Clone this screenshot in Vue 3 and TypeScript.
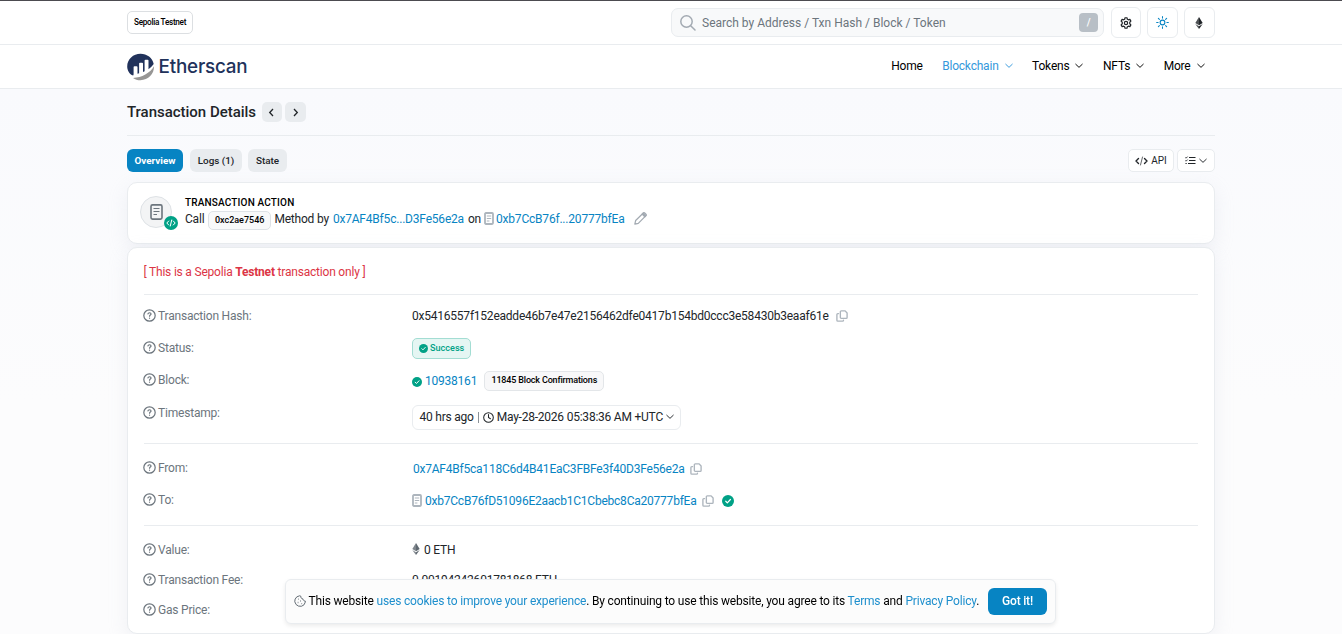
<script setup lang="ts">
import { h, type FunctionalComponent } from 'vue'

interface NavItem {
  label: string
  active?: boolean
  menu?: boolean
}

const navItems: NavItem[] = [
  { label: 'Home' },
  { label: 'Blockchain', active: true, menu: true },
  { label: 'Tokens', menu: true },
  { label: 'NFTs', menu: true },
  { label: 'More', menu: true },
]

const stroke = (size: number, width: number, d: string[], viewBox = '0 0 16 16') =>
  h(
    'svg',
    {
      width: size,
      height: size,
      viewBox,
      fill: 'none',
      stroke: 'currentColor',
      'stroke-width': width,
      'stroke-linecap': 'round',
      'stroke-linejoin': 'round',
    },
    d.map((path) => h('path', { d: path })),
  )

const Chevron: FunctionalComponent = () => stroke(8, 1.9, ['M1.5 4.5l6.5 6.2L14.5 4.5'])
const Help: FunctionalComponent = () =>
  stroke(13, 1.5, [
    'M8 1a7 7 0 1 1 0 14A7 7 0 0 1 8 1z',
    'M6.1 6.1c.2-1 .9-1.5 1.9-1.5 1.1 0 1.9.7 1.9 1.6 0 1.2-1.8 1.3-1.8 2.6',
    'M8.05 11.2v.1',
  ])
const Copy: FunctionalComponent = () =>
  stroke(12, 1.8, [
    'M7 1.2h5.2L14.8 4v6a1.2 1.2 0 0 1-1.2 1.2H7A1.2 1.2 0 0 1 5.8 10V2.4A1.2 1.2 0 0 1 7 1.2z',
    'M3.4 4.8H2.4A1.2 1.2 0 0 0 1.2 6v7.6A1.2 1.2 0 0 0 2.4 14.8H8.8A1.2 1.2 0 0 0 10 13.6',
  ])
const Contract: FunctionalComponent = () =>
  h('svg', { width: 10, height: 13, viewBox: '0 0 10 13', fill: 'none', stroke: 'currentColor' }, [
    h('rect', { x: 1, y: 1, width: 8, height: 11, rx: 0.9, 'stroke-width': 1.8 }),
    h('path', { d: 'M2.8 4h4.4M2.8 6.5h4.4M2.8 9h2.6', 'stroke-width': 1.1 }),
  ])
const Check: FunctionalComponent = () =>
  h('svg', { width: 10, height: 10, viewBox: '0 0 16 16' }, [
    h('circle', { cx: 8, cy: 8, r: 8, fill: '#00a186' }),
    h('path', {
      d: 'M5 8.3l2.1 2.1L11.2 6',
      fill: 'none',
      stroke: '#fff',
      'stroke-width': 1.6,
      'stroke-linecap': 'round',
      'stroke-linejoin': 'round',
    }),
  ])
const Ether: FunctionalComponent = () =>
  h('svg', { width: 8, height: 12, viewBox: '0 0 8 12' }, [
    h('path', { d: 'M4 0L0.3 6.1 4 8.3z', fill: 'currentColor', opacity: 0.8 }),
    h('path', { d: 'M4 0L7.7 6.1 4 8.3z', fill: 'currentColor' }),
    h('path', { d: 'M.3 7L4 9.2V12z', fill: 'currentColor', opacity: 0.8 }),
    h('path', { d: 'M7.7 7L4 9.2V12z', fill: 'currentColor' }),
  ])
</script>

<template>
  <div class="page">
    <header class="topbar">
      <div class="wrap bar-row">
        <span class="network">Sepolia Testnet</span>
        <div class="tools">
          <div class="search">
            <svg width="16" height="16" viewBox="0 0 16 16" fill="none" stroke="#a3aab2" stroke-width="1.5" stroke-linecap="round">
              <circle cx="6.5" cy="6.5" r="5.7" />
              <path d="M10.7 10.7L15 15" />
            </svg>
            <span class="placeholder">Search by Address / Txn Hash / Block / Token</span>
            <kbd>/</kbd>
          </div>
          <button class="tool" aria-label="Settings">
            <svg width="12" height="12" viewBox="0 0 16 16" fill="none" stroke="#212529" stroke-width="1.6" stroke-linejoin="round">
              <path d="M6.700 1h2.600l.5 2 1.400.8 2-.6 1.300 2.300L13 7v2l1.500 1.500-1.300 2.300-2-.6-1.400.8-.5 2H6.700l-.5-2-1.400-.8-2 .6-1.300-2.300L3 9V7L1.500 5.500l1.300-2.300 2 .6L6.200 3z" />
              <circle cx="8" cy="8" r="2.200" />
            </svg>
          </button>
          <button class="tool" aria-label="Theme">
            <svg width="13" height="13" viewBox="0 0 16 16" fill="none" stroke="#0784c3" stroke-width="1.3" stroke-linecap="round">
              <circle cx="8" cy="8" r="2.900" />
              <path d="M8 .8v1.800M8 13.400v1.800M.8 8h1.800M13.400 8h1.800M2.900 2.900l1.300 1.300M11.800 11.800l1.300 1.300M2.900 13.100l1.300-1.300M11.800 4.200l1.300-1.300" />
            </svg>
          </button>
          <button class="tool eth-tool" aria-label="Network"><Ether /></button>
        </div>
      </div>
    </header>

    <nav class="navbar">
      <div class="wrap bar-row">
        <svg class="logo" width="122" height="28" viewBox="0 0 122 28">
          <path d="M6.100 22.500C2.500 21.500.2 17.300.2 13.500.2 6.300 6.200.8 13.500.8c6.500 0 12 4.200 13.200 10.200-1.200 1.800-3.200 3.800-5.200 5.200V7.600c0-.6-.3-.9-.9-.9h-2.100c-.6 0-.9.3-.9.9v10.600l-1.600.8v-8.400c0-.6-.3-.9-.9-.9H13c-.6 0-.9.3-.9.9v9.700l-1.600.4v-6.500c0-.6-.3-.9-.9-.9H7.500c-.6 0-.9.3-.9.9v6.500c0 1-.2 1.500-.5 1.800z" fill="#21325b" />
          <path d="M27 13.300c.3 7.600-5.800 13.900-13.500 13.900-2.900 0-5.300-.9-7.500-2.300 8.800-.2 17-4.800 21-11.600z" fill="#979695" />
          <text x="31.500" y="20" textLength="89" lengthAdjust="spacingAndGlyphs">Etherscan</text>
        </svg>
        <ul class="menu">
          <li v-for="item in navItems" :key="item.label" :class="{ active: item.active }">
            <span>{{ item.label }}</span>
            <Chevron v-if="item.menu" />
          </li>
        </ul>
      </div>
    </nav>

    <main class="wrap">
      <div class="heading">
        <h1>Transaction Details</h1>
        <button class="step" aria-label="Previous">
          <svg width="7" height="9" viewBox="0 0 7 9"><path d="M5 1L1.700 4.500 5 8" /></svg>
        </button>
        <button class="step" aria-label="Next">
          <svg width="7" height="9" viewBox="0 0 7 9"><path d="M2 1l3.300 3.500L2 8" /></svg>
        </button>
      </div>

      <div class="tabs">
        <button class="tab current">Overview</button>
        <button class="tab">Logs (1)</button>
        <button class="tab">State</button>
        <div class="actions">
          <button class="small">
            <svg width="13" height="10" viewBox="0 0 13 10" fill="none" stroke="currentColor" stroke-width="1.4" stroke-linecap="round" stroke-linejoin="round">
              <path d="M3.500 2.500L1 5l2.500 2.500M9.500 2.500L12 5 9.500 7.500" />
              <path d="M7.500 1l-2 8" stroke-width=".7" />
            </svg>
            <span>API</span>
          </button>
          <button class="small list" aria-label="View options">
            <svg width="11" height="9" viewBox="0 0 11 9" fill="none" stroke="currentColor" stroke-width="1.1">
              <path d="M4 1.500h6.500M4 4.500h6.500M3 7.500h7.500M.5 7.500h1.200" />
              <path d="M.4 1.500l.7.700L2.600.6M.4 4.500l.7.700 1.500-1.600" stroke-width=".9" />
            </svg>
            <Chevron />
          </button>
        </div>
      </div>

      <section class="card action">
        <div class="avatar">
          <svg width="13" height="16" viewBox="0 0 13 16" fill="none" stroke="#6c757d">
            <rect x="1" y=".9" width="11" height="14.200" rx="1.500" stroke-width="1.600" />
            <path d="M3.500 4.500h6M3.500 7.500h6M3.500 10.500h3.500" stroke-width="1.200" />
          </svg>
          <span class="code-badge">
            <svg width="10" height="8" viewBox="0 0 10 8" fill="none" stroke="#fff" stroke-width="1" stroke-linecap="round" stroke-linejoin="round">
              <path d="M2.700 2L.8 4l1.900 2M7.300 2l1.900 2-1.900 2M5.700 1L4.300 7" />
            </svg>
          </span>
        </div>
        <div>
          <h2>TRANSACTION ACTION</h2>
          <div class="sentence">
            <span>Call</span>
            <span class="method">0xc2ae7546</span>
            <span>Method by</span>
            <a class="by">0x7AF4Bf5c...D3Fe56e2a</a>
            <span class="on">on</span>
            <Contract class="muted" />
            <a>0xb7CcB76f...20777bfEa</a>
            <svg class="pencil" width="13" height="13" viewBox="0 0 16 16" fill="none" stroke="#a3aab2" stroke-width="1.5" stroke-linejoin="round">
              <path d="M1 15l1-4.500L11.500 1.200c.5-.5 1.200-.5 1.700 0l1.500 1.500c.5.5.5 1.200 0 1.700L5.300 14z" />
              <path d="M10 2.700L13.300 6l1.500-1.500L11.500 1.200z" fill="#a3aab2" />
            </svg>
          </div>
        </div>
      </section>

      <section class="card details">
        <p class="notice">[ This is a Sepolia <b>Testnet</b> transaction only ]</p>

        <dl class="group first">
          <div class="row">
            <dt><Help />Transaction Hash:</dt>
            <dd>0x5416557f152eadde46b7e47e2156462dfe0417b154bd0ccc3e58430b3eaaf61e<Copy class="copy hash-copy" /></dd>
          </div>
          <div class="row">
            <dt><Help />Status:</dt>
            <dd><span class="success"><Check class="mini" />Success</span></dd>
          </div>
          <div class="row">
            <dt><Help />Block:</dt>
            <dd class="block"><Check class="tick" /><a>10938161</a><span class="confirmations">11845 Block Confirmations</span></dd>
          </div>
          <div class="row stamp">
            <dt><Help />Timestamp:</dt>
            <dd>
              <span class="time">
                <span>40 hrs ago</span><i></i>
                <svg width="11" height="11" viewBox="0 0 16 16" fill="none" stroke="currentColor" stroke-width="1.5" stroke-linecap="round">
                  <circle cx="8" cy="8" r="7" />
                  <path d="M8 3.800V8l2.800 1.800" />
                </svg>
                <span class="date">May-28-2026 05:38:36 AM +UTC</span>
                <Chevron />
              </span>
            </dd>
          </div>
        </dl>

        <dl class="group second">
          <div class="row">
            <dt><Help />From:</dt>
            <dd class="from"><a>0x7AF4Bf5ca118C6d4B41EaC3FBFe3f40D3Fe56e2a</a><Copy class="copy" /></dd>
          </div>
          <div class="row">
            <dt><Help />To:</dt>
            <dd class="to"><Contract class="muted" /><a>0xb7CcB76fD51096E2aacb1C1Cbebc8Ca20777bfEa</a><Copy class="copy" /><Check class="verified" /></dd>
          </div>
        </dl>

        <dl class="group third">
          <div class="row">
            <dt><Help />Value:</dt>
            <dd class="value"><Ether />0 ETH</dd>
          </div>
          <div class="row">
            <dt><Help />Transaction Fee:</dt>
            <dd>0.00194242601781868 ETH</dd>
          </div>
          <div class="row">
            <dt><Help />Gas Price:</dt>
            <dd></dd>
          </div>
        </dl>
      </section>
    </main>

    <aside class="cookies">
      <svg width="12" height="12" viewBox="0 0 16 16" fill="none" stroke="#5f6870" stroke-width="1.3" stroke-linejoin="round">
        <path d="M7.500 1L3.700 2.500 1.500 5.500 1 9l1.800 3.700L6 14.800l4 .2 3.400-2L15 9.500V8c-1.800 0-3-1.200-3-2.800C10.200 5.200 9 4 9 1.500z" />
        <path d="M5.500 5.500h.8M5 10h.8M8.500 8h.8M10 11.500h.8" stroke-width="1.700" />
      </svg>
      <p>This website <a>uses cookies to improve your experience</a>. By continuing to use this website, you agree to its <a>Terms</a> and <a>Privacy Policy</a>.</p>
      <button>Got it!</button>
    </aside>
  </div>
</template>

<style>
html,
body {
  overflow: hidden;
}
</style>

<style scoped>
* {
  box-sizing: border-box;
}
.page {
  height: 634px;
  overflow: hidden;
  border-top: 1px solid #4c4b50;
  background: linear-gradient(#f9fafd 88px, #fcfcfd 400px);
  color: #212529;
  font: 12px/16px Roboto, sans-serif;
  letter-spacing: -0.2px;
}
svg {
  display: block;
  flex: none;
}
button {
  padding: 0;
  font-family: inherit;
  color: inherit;
  letter-spacing: 0;
}
a {
  color: #0784c3;
}
.wrap {
  width: 1088px;
  margin: 0 auto;
}
.bar-row {
  display: flex;
  align-items: center;
  justify-content: space-between;
  height: 43px;
}
.topbar,
.navbar {
  background: #fff;
  border-bottom: 1px solid #e9ecef;
}
.network {
  height: 23px;
  padding: 0 6px;
  border: 1px solid #dcdfe2;
  border-radius: 5px;
  font-size: 8.2px;
  font-weight: 500;
  letter-spacing: -0.3px;
  line-height: 21px;
  color: #000;
}
.tools {
  display: flex;
  align-items: center;
}
.search {
  display: flex;
  align-items: center;
  width: 433px;
  height: 29px;
  margin-right: 7px;
  padding: 0 5px 0 8px;
  border: 1px solid #e9ecef;
  border-radius: 7px;
  background: #f8f9fa;
}
.placeholder {
  margin-left: 6px;
  letter-spacing: 0;
  color: #6c757d;
}
kbd {
  width: 19px;
  height: 19px;
  margin-left: auto;
  border-radius: 4px;
  background: #b8bfc6;
  color: #fff;
  font: 500 10px/19px Roboto, sans-serif;
  text-align: center;
}
.tool {
  display: flex;
  align-items: center;
  justify-content: center;
  width: 30px;
  height: 31px;
  margin-right: 6px;
  border: 1px solid #e9ecef;
  border-radius: 6px;
  background: #fff;
}
.tool + .tool {
  width: 31px;
}
.tool.eth-tool {
  margin-right: 0;
  padding-right: 1px;
}
.logo text {
  font: 500 19px Inter, sans-serif;
  fill: #21325b;
}
.menu {
  display: flex;
  gap: 19.5px;
  margin: 0;
  padding: 0 10.5px 2px 0;
  list-style: none;
  letter-spacing: -0.2px;
  color: #000;
}
.menu li {
  display: flex;
  align-items: center;
  gap: 6px;
}
.menu .active {
  color: #3498db;
}
.heading {
  display: flex;
  align-items: center;
  gap: 3px;
  height: 47px;
  border-bottom: 1px solid #e9ecef;
}
h1 {
  margin: 0 2.5px 0 0;
  padding-bottom: 1px;
  font-size: 15px;
  font-weight: 500;
  letter-spacing: -0.02px;
}
.step {
  display: flex;
  align-items: center;
  justify-content: center;
  width: 20.5px;
  height: 20px;
  border: 0;
  border-radius: 5px;
  background: #e9ecef;
}
.step path {
  fill: none;
  stroke: #212529;
  stroke-width: 1.3;
}
.tabs {
  display: flex;
  gap: 7px;
  margin-top: 13px;
}
.tab {
  width: 39px;
  height: 23px;
  border: 0;
  border-radius: 6px;
  background: #e9ecef;
  font-size: 9.9px;
  font-weight: 500;
  color: #212529;
}
.tab:nth-child(2) {
  width: 52px;
}
.tab:nth-child(3) {
  margin-left: -1px;
}
.tab.current {
  width: 56px;
  background: #0784c3;
  color: #fff;
  font-weight: 700;
}
.actions {
  display: flex;
  gap: 3px;
  margin-left: auto;
}
.small {
  display: flex;
  align-items: center;
  justify-content: center;
  gap: 3px;
  width: 46px;
  height: 23px;
  border: 1px solid #e9ecef;
  border-radius: 5px;
  background: #fff;
  font-size: 10px;
}
.small.list {
  width: 38px;
}
.card {
  border: 1px solid #e9ecef;
  border-radius: 10px;
  background: #fff;
  box-shadow: 0 6px 19px rgba(189, 197, 209, 0.2);
}
.action {
  display: flex;
  height: 62px;
  margin-top: 10px;
  padding: 13px 12px;
}
.avatar {
  position: relative;
  display: flex;
  align-items: center;
  justify-content: center;
  width: 32px;
  height: 32px;
  margin-right: 13px;
  border: 1px solid #dee2e6;
  border-radius: 50%;
  background: #f3f4f5;
}
.code-badge {
  position: absolute;
  right: -7px;
  bottom: -3px;
  display: flex;
  align-items: center;
  justify-content: center;
  width: 14px;
  height: 14px;
  border-radius: 50%;
  background: #00a186;
}
h2 {
  margin: 0;
  font-size: 10px;
  font-weight: 500;
  line-height: 13px;
  letter-spacing: 0.17px;
  color: #000;
}
.sentence {
  display: flex;
  align-items: center;
  height: 19px;
}
.method {
  height: 19px;
  margin: 3px 3px 0 3.5px;
  padding: 0 6px;
  border: 1px solid #dee2e6;
  border-radius: 5px;
  background: #f8f9fa;
  font-size: 9px;
  font-weight: 500;
  letter-spacing: 0;
  line-height: 17px;
  color: #000;
}
.by {
  margin-left: 4px;
}
.on {
  margin: 0 3px 0 4px;
}
.muted {
  color: #adb5bd;
  margin-right: 2px;
}
.pencil {
  margin-left: 10px;
}
.details {
  height: 387px;
  margin-top: 3px;
  padding: 0 16px;
}
.notice {
  height: 46px;
  margin: 0 0 0 -0.5px;
  color: #dc3545;
  line-height: 48px;
}
.group {
  margin: 0;
  border-top: 1px solid #e9ecef;
}
.group.first {
  height: 149px;
  padding-top: 5px;
}
.group.second {
  height: 82px;
  padding-top: 8px;
}
.group.third {
  padding-top: 9px;
}
.row {
  display: flex;
  align-items: center;
  height: 32px;
}
.third .row {
  height: 30px;
}
.row.stamp {
  height: 42px;
}
.stamp dt {
  align-self: flex-start;
  margin-top: 9px;
}
dt {
  display: flex;
  align-items: center;
  gap: 2px;
  width: 269px;
  margin-left: -1px;
  color: #6c757d;
}
dt svg {
  margin-bottom: 1px;
}
dd {
  display: flex;
  align-items: center;
  margin: 0;
  letter-spacing: -0.225px;
}
.copy {
  margin-left: 5.5px;
  color: #adb5bd;
}
.hash-copy {
  margin-left: 7px;
}
.success {
  display: flex;
  align-items: center;
  gap: 2px;
  height: 21px;
  margin-top: 1px;
  padding: 0 6px;
  border: 1px solid #a3ddd3;
  border-radius: 5px;
  background: #e5f6f3;
  font-size: 9.1px;
  font-weight: 500;
  letter-spacing: 0;
  line-height: 17px;
  color: #00a186;
}
.success .mini {
  width: 9px;
  height: 9px;
}
.block {
  padding-top: 2px;
}
.tick {
  margin: 2px 3px 0 0;
}
.confirmations {
  height: 20px;
  margin-left: 7.3px;
  padding: 0 6px;
  border: 1px solid #e3e6e9;
  border-radius: 5px;
  background: #f8f8f9;
  font-size: 9px;
  font-weight: 500;
  letter-spacing: -0.17px;
  line-height: 17px;
  color: #000;
}
.time {
  display: flex;
  align-items: center;
  height: 25px;
  padding: 0 6.5px;
  border: 1px solid #e9ecef;
  border-radius: 6px;
}
.time i {
  width: 1px;
  height: 11px;
  margin: 0 4px;
  background: #8b9298;
}
.date {
  margin: 0 3px;
}
.from {
  padding: 1px 0 0 1px;
}
.to {
  padding-top: 1px;
}
.to .muted {
  margin-right: 3px;
}
.verified {
  width: 12px;
  height: 12px;
  margin-left: 8px;
}
.value {
  gap: 4px;
}
.value svg {
  margin-bottom: 2px;
  color: #5f6870;
}
.cookies {
  position: fixed;
  bottom: 10px;
  left: 285px;
  display: flex;
  align-items: center;
  width: 771px;
  height: 45px;
  padding: 0 8px;
  border: 1px solid #e9ecef;
  border-radius: 6px;
  background: #fcfcfc;
  box-shadow: 0 2px 4px rgba(0, 0, 0, 0.08);
  color: #000;
}
.cookies svg {
  margin-bottom: 1px;
}
.cookies p {
  margin: 0 0 1px 2.5px;
  letter-spacing: -0.178px;
  white-space: nowrap;
}
.cookies a {
  color: #1e8fcd;
}
.cookies button {
  width: 59px;
  height: 27px;
  margin-left: auto;
  padding-bottom: 1px;
  border: 0;
  border-radius: 6px;
  background: #0784c3;
  color: #fff;
  font-size: 12px;
  font-weight: 500;
  letter-spacing: -0.2px;
}
</style>
